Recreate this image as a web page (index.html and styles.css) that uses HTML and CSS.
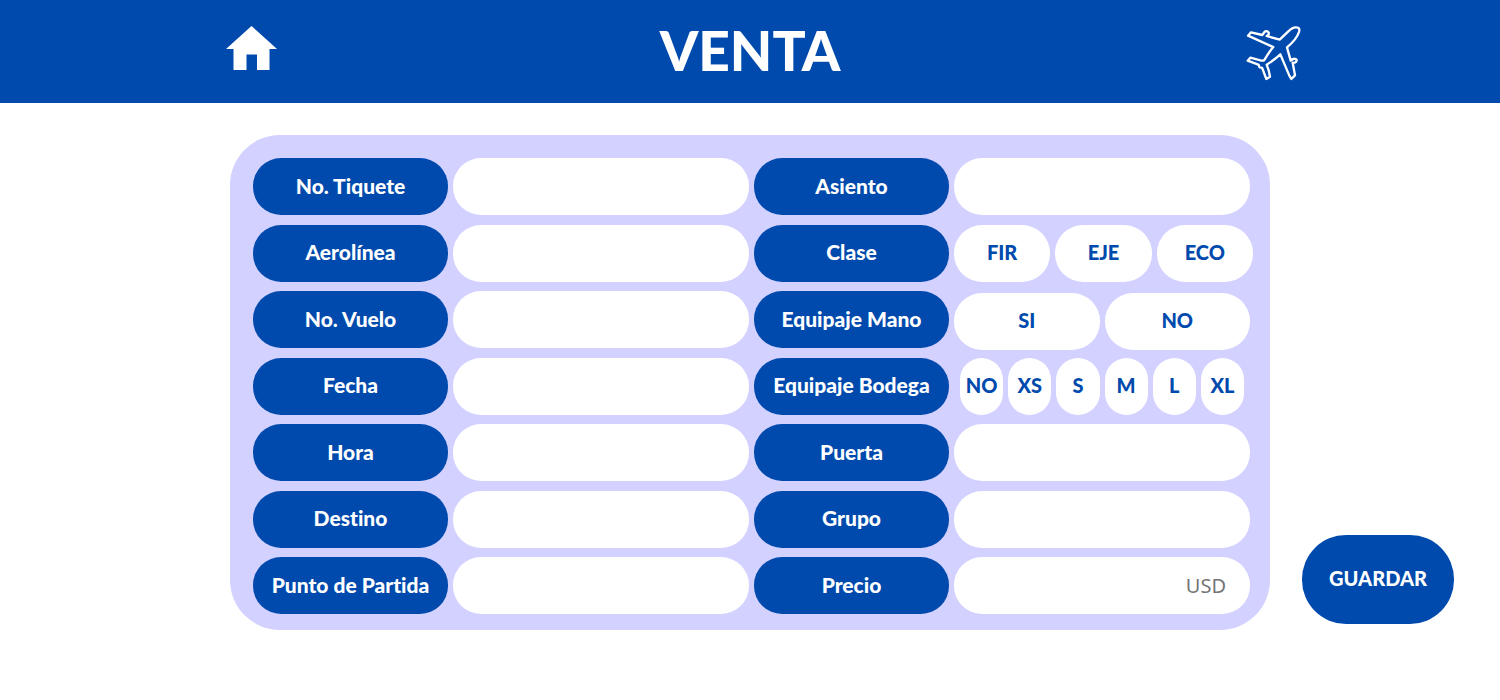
FILE: index.html
```html
<!DOCTYPE html>
<html lang="es">
<head>
  <meta charset="utf-8">
  <meta name="viewport" content="width=device-width, initial-scale=1">
  <title>Venta</title>
  <link rel="stylesheet" href="styles.css">
</head>
<body>
  <header class="header">
    <div class="header-inner">
      <a class="home" href="#" aria-label="Inicio">
        <svg class="home-icon" viewBox="0 0 51 44" aria-hidden="true"><path d="M25.500 0 51 23h-7.500v21H31V28.500H20.500V44H7.500V23H0z" fill="currentColor"/></svg>
      </a>
      <h1 class="title">VENTA</h1>
      <svg class="plane-icon" viewBox="50 48 165 165" aria-hidden="true"><path d="M205 53C196 50 184 57 177 64L151 89 112 78 117 75C121 68 115 62 108 64 104 66 103 71 99 75L65 67 56 77 132 111C121 123 112 139 104 151 100 153 97 152 93 151L63 143 55 152 87 164C91 166 88 170 91 172 94 174 97 171 99 175L111 207 122 200 118 181 112 164C125 156 140 145 153 133L180 197 186 207 197 196 190 158C195 160 201 157 202 152 202 145 192 144 184 152L173 112C185 102 204 82 209 66 211 59 210 54 205 53Z" fill="none" stroke="currentColor" stroke-width="7" stroke-linejoin="round"/></svg>
    </div>
  </header>

  <form class="main">
    <div class="panel">
      <div class="fields">
        <label class="tag" for="tiquete">No. Tiquete</label>
        <input class="field" id="tiquete" type="text">
        <label class="tag" for="asiento">Asiento</label>
        <input class="field" id="asiento" type="text">

        <label class="tag" for="aerolinea">Aerolínea</label>
        <input class="field" id="aerolinea" type="text">
        <span class="tag" id="clase">Clase</span>
        <div class="options options-class" role="group" aria-labelledby="clase">
          <button class="option" type="button">FIR</button>
          <button class="option" type="button">EJE</button>
          <button class="option" type="button">ECO</button>
        </div>

        <label class="tag" for="vuelo">No. Vuelo</label>
        <input class="field" id="vuelo" type="text">
        <span class="tag" id="mano">Equipaje Mano</span>
        <div class="options options-hand" role="group" aria-labelledby="mano">
          <button class="option" type="button">SI</button>
          <button class="option" type="button">NO</button>
        </div>

        <label class="tag" for="fecha">Fecha</label>
        <input class="field" id="fecha" type="text">
        <span class="tag" id="bodega">Equipaje Bodega</span>
        <div class="options options-hold" role="group" aria-labelledby="bodega">
          <button class="option" type="button">NO</button>
          <button class="option" type="button">XS</button>
          <button class="option" type="button">S</button>
          <button class="option" type="button">M</button>
          <button class="option" type="button">L</button>
          <button class="option" type="button">XL</button>
        </div>

        <label class="tag" for="hora">Hora</label>
        <input class="field" id="hora" type="text">
        <label class="tag" for="puerta">Puerta</label>
        <input class="field" id="puerta" type="text">

        <label class="tag" for="destino">Destino</label>
        <input class="field" id="destino" type="text">
        <label class="tag" for="grupo">Grupo</label>
        <input class="field" id="grupo" type="text">

        <label class="tag" for="partida">Punto de Partida</label>
        <input class="field" id="partida" type="text">
        <label class="tag" for="precio">Precio</label>
        <input class="field field-price" id="precio" type="text" placeholder="USD">
      </div>
    </div>
    <button class="save" type="submit">GUARDAR</button>
  </form>
</body>
</html>
```

FILE: styles.css
```css
:root {
  --blue: #004aad;
  --lilac: #d3d1ff;
}

* {
  box-sizing: border-box;
}

body {
  margin: 0;
  background: #fff;
  font-family: Lato, sans-serif;
  font-variant-ligatures: none;
}

button,
input {
  border: 0;
  font: inherit;
}

.header {
  background: var(--blue);
  color: #fff;
}

.header-inner {
  display: grid;
  grid-template-columns: 1fr auto 1fr;
  align-items: center;
  max-width: 1102px;
  min-height: 103px;
  margin: 0 auto;
}

.home {
  justify-self: start;
  margin-left: 27px;
  padding-bottom: 8px;
  color: inherit;
}

.home-icon {
  display: block;
  width: 51px;
  height: 44px;
}

.title {
  margin: 0;
  padding-bottom: 4px;
  font-size: 55px;
  font-weight: 900;
  line-height: 96px;
}

.plane-icon {
  justify-self: end;
  width: 55px;
  height: 55px;
  margin-top: 4px;
}

.main {
  display: grid;
  grid-template-columns: 1fr minmax(0, 1040px) 1fr;
  padding-top: 32px;
}

.panel {
  grid-column: 2;
  padding: 23px 20px 16px 23px;
  border-radius: 50px;
  background: var(--lilac);
}

.fields {
  display: grid;
  grid-template-columns: 195fr 296fr 195fr 296fr;
  grid-auto-rows: 57px;
  align-content: space-between;
  column-gap: 5px;
  min-height: 456px;
}

.tag {
  display: flex;
  align-items: center;
  justify-content: center;
  padding-bottom: 3px;
  border-radius: 28px;
  background: var(--blue);
  color: #fff;
  font-size: 21px;
  font-weight: 900;
  white-space: nowrap;
}

.field {
  width: 100%;
  min-width: 0;
  padding: 0 24px;
  border-radius: 28px;
  background: #fff;
  font-family: "Noto Sans", sans-serif;
  font-size: 20px;
}

.field-price {
  text-align: right;
}

.field-price::placeholder {
  color: #757575;
  opacity: 1;
}

.options {
  display: flex;
  gap: 5px;
}

.option {
  flex: 1;
  min-width: 0;
  padding: 0 0 3px;
  border-radius: 28px;
  background: #fff;
  color: var(--blue);
  font-size: 20px;
  font-weight: 900;
}

.options-class {
  margin-right: -3px;
}

.options-hand {
  margin: 2px 0 -2px;
}

.options-hold {
  padding: 0 6px;
}

.save {
  grid-column: 3;
  align-self: end;
  justify-self: start;
  width: 152px;
  height: 89px;
  margin: 0 0 6px 32px;
  padding: 0 0 3px;
  border-radius: 44px;
  background: var(--blue);
  color: #fff;
  font-size: 20px;
  font-weight: 900;
}
```
